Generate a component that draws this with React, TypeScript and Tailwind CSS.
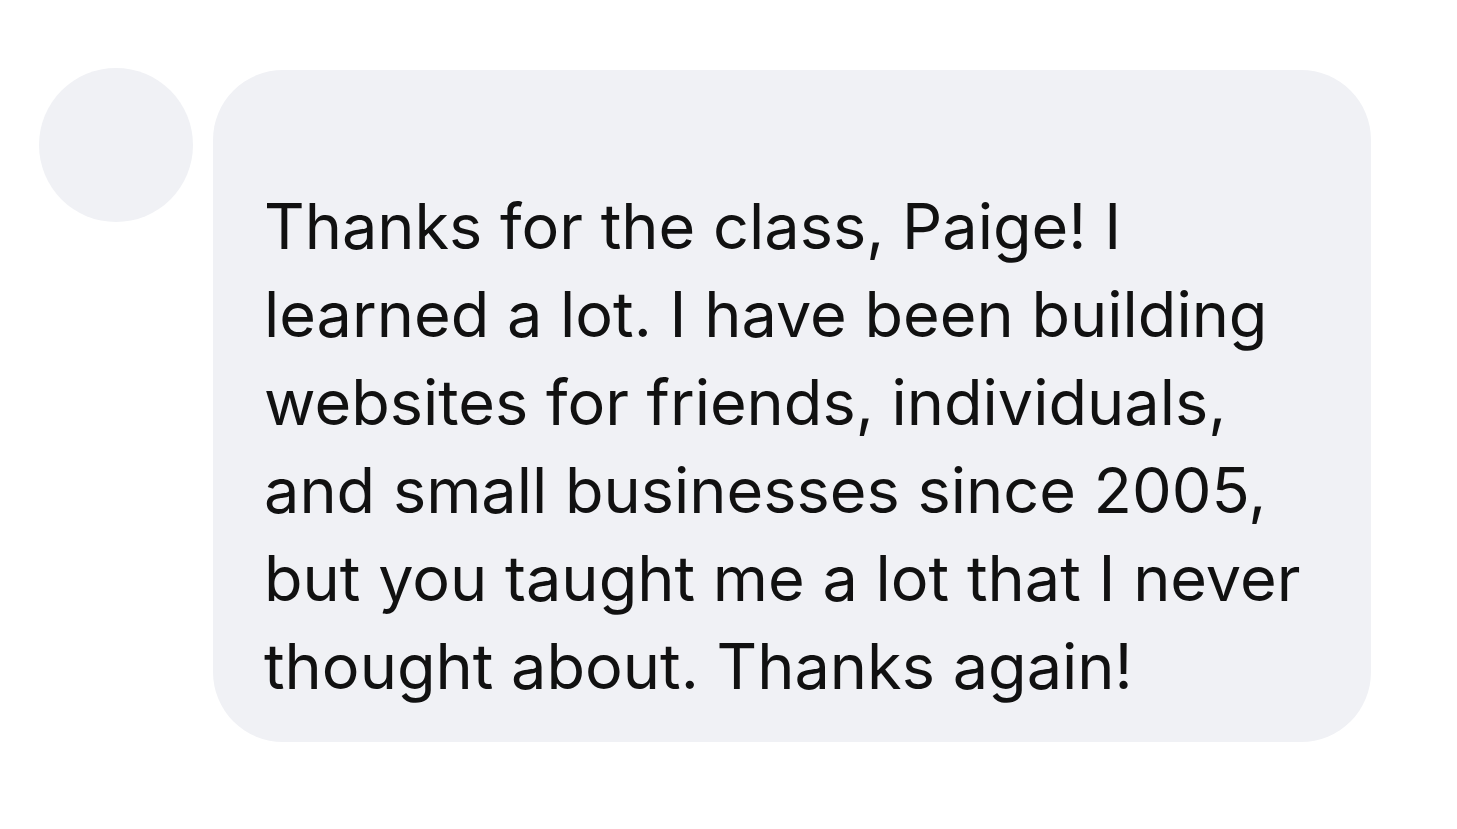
import React from 'react';

const lines = [
  'Thanks for the class, Paige! I',
  'learned a lot. I have been building',
  'websites for friends, individuals,',
  'and small businesses since 2005,',
  'but you taught me a lot that I never',
  'thought about. Thanks again!',
];

const App: React.FC = () => {
  return (
    <div className="min-h-[829px] w-[1457px] bg-white" style={{ fontFamily: 'Inter, "Noto Sans", sans-serif' }}>
      <div className="flex items-start pl-[39px] pt-[68px] gap-[20px]">
        <div className="h-[154px] w-[154px] shrink-0 rounded-full bg-[#f0f1f5]" />
        <div className="mt-[2px] w-[1158px] rounded-[70px] bg-[#f0f1f5] pl-[51px] pr-[40px] pt-[112px] pb-[32px]">
          <p className="text-[63px] leading-[88px] text-[#111111] whitespace-nowrap">
            {lines.map((l, i) => (
              <React.Fragment key={i}>
                {l}
                {i < lines.length - 1 && <br />}
              </React.Fragment>
            ))}
          </p>
        </div>
      </div>
    </div>
  );
};

export default App;
